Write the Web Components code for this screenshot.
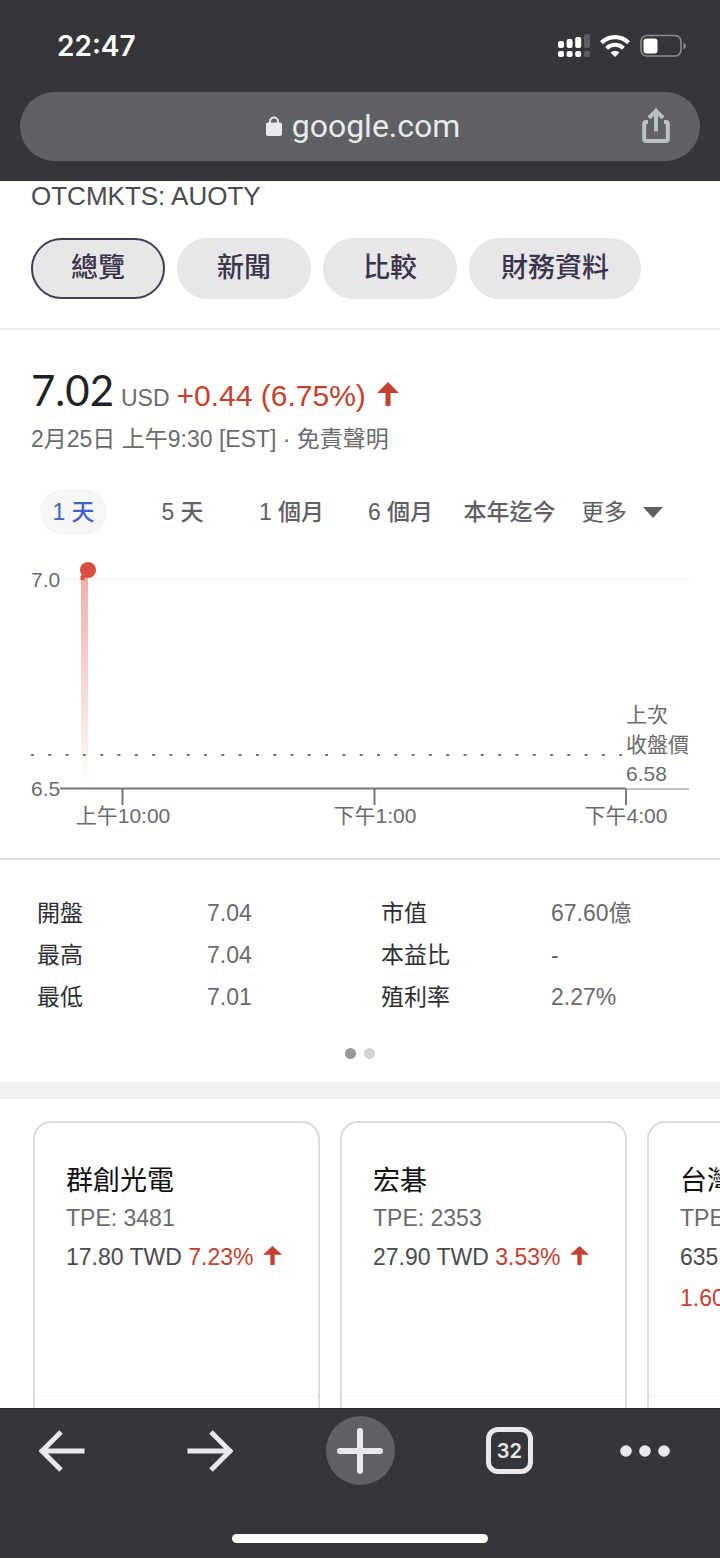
<!DOCTYPE html>
<html lang="zh-Hant">
<head>
<meta charset="utf-8">
<meta name="viewport" content="width=device-width, initial-scale=1">
<title>AUOTY</title>
<style>
  body {
    margin: 0;
    background: #fff;
    font-family: "Liberation Sans", "Noto Sans CJK TC", sans-serif;
  }
</style>
</head>
<body>
<phone-screen>
  <status-bar slot="top" time="22:47"></status-bar>
  <address-bar slot="top" host="google.com"></address-bar>

  <stock-head ticker="OTCMKTS: AUOTY">
    <nav-chip active>總覽</nav-chip>
    <nav-chip>新聞</nav-chip>
    <nav-chip>比較</nav-chip>
    <nav-chip>財務資料</nav-chip>
  </stock-head>
  <stock-price price="7.02" currency="USD" change="+0.44 (6.75%)">2月25日 上午9:30 [EST] · 免責聲明</stock-price>
  <range-tabs></range-tabs>
  <price-chart></price-chart>
  <stock-stats></stock-stats>
  <related-stocks>
    <stock-card name="群創光電" code="TPE: 3481" price="17.80 TWD" change="7.23%"></stock-card>
    <stock-card name="宏碁" code="TPE: 2353" price="27.90 TWD" change="3.53%"></stock-card>
    <stock-card name="台灣積體電路" code="TPE: 2330" price="635.00 TWD" change="1.60%"></stock-card>
  </related-stocks>

  <tool-bar slot="bottom" tabs="32"></tool-bar>
</phone-screen>

<script>
const upArrow = `<svg class="up" viewBox="0 0 22 24" preserveAspectRatio="none" aria-hidden="true"><path d="M11 0 22 11H13.500V24H8.500V11H0Z" fill="#c5402f"/></svg>`;

class PhoneScreen extends HTMLElement {
  constructor() {
    super();
    this.attachShadow({ mode: "open" });
    this.shadowRoot.innerHTML = `
      <style>
        :host {
          display: flex;
          flex-direction: column;
          height: 100vh;
        }
        header {
          flex: none;
          padding-bottom: 20px;
          background: #35363a;
        }
        main {
          flex: 1;
          min-height: 0;
          overflow: hidden;
        }
        footer {
          flex: none;
          background: #35363a;
        }
      </style>
      <header><slot name="top"></slot></header>
      <main><slot></slot></main>
      <footer><slot name="bottom"></slot></footer>
    `;
  }
}
customElements.define("phone-screen", PhoneScreen);

class StatusBar extends HTMLElement {
  constructor() {
    super();
    this.attachShadow({ mode: "open" });
    this.shadowRoot.innerHTML = `
      <style>
        :host {
          display: flex;
          justify-content: space-between;
          align-items: center;
          height: 92px;
          padding: 0 34px 0 57px;
          color: #fff;
        }
        time {
          font: 600 28px/32px Inter, "Liberation Sans", sans-serif;
        }
        div {
          display: flex;
          align-items: center;
          gap: 10px;
        }
      </style>
      <time>${this.getAttribute("time")}</time>
      <div>
        <svg width="32" height="24" viewBox="0 0 32 24" fill="#fff" aria-label="signal">
          <rect x="0" y="7" width="6" height="7" rx="2"/>
          <rect x="8.600" y="5" width="6" height="9" rx="2"/>
          <rect x="17.200" y="3" width="6" height="11" rx="2"/>
          <rect x="26" y="0" width="6" height="14" rx="2" fill="#5c5d61"/>
          <rect x="0" y="17" width="6" height="6" rx="2"/>
          <rect x="8.600" y="17" width="6" height="6" rx="2"/>
          <rect x="17.200" y="17" width="6" height="6" rx="2"/>
          <rect x="26" y="17" width="6" height="6" rx="2" fill="#5c5d61"/>
        </svg>
        <svg width="30" height="22" viewBox="0 0 30 22" aria-label="wifi">
          <path d="M1.500 7.800A19 19 0 0 1 28.500 7.800" fill="none" stroke="#fff" stroke-width="4.200"/>
          <path d="M6.600 13.300A12 12 0 0 1 23.400 13.300" fill="none" stroke="#fff" stroke-width="4"/>
          <path d="M15 22 10.500 17.600A6.400 6.400 0 0 1 19.500 17.600Z" fill="#fff"/>
        </svg>
        <svg width="46" height="24" viewBox="0 0 46 24" aria-label="battery">
          <rect x="1" y="1.500" width="40" height="20.500" rx="6" fill="none" stroke="#8b8c8f" stroke-width="1.600"/>
          <rect x="3.500" y="4.500" width="14" height="15" rx="3" fill="#fff"/>
          <path d="M43.500 8.500Q46 9.500 46 12T43.500 15.500Z" fill="#8b8c8f"/>
        </svg>
      </div>
    `;
  }
}
customElements.define("status-bar", StatusBar);

class AddressBar extends HTMLElement {
  constructor() {
    super();
    this.attachShadow({ mode: "open" });
    this.shadowRoot.innerHTML = `
      <style>
        :host {
          display: grid;
          grid-template-columns: 1fr auto 1fr;
          align-items: center;
          height: 69px;
          margin: 0 20px;
          border-radius: 35px;
          background: #5f6165;
        }
        label {
          grid-column: 2;
          display: flex;
          align-items: center;
          gap: 10px;
          padding: 0 0 2px 6px;
        }
        input {
          field-sizing: content;
          padding: 0;
          border: 0;
          background: none;
          color: #e8eaed;
          font: 400 32px/40px Roboto, "Liberation Sans", sans-serif;
        }
        button {
          justify-self: end;
          display: flex;
          margin-right: 30px;
          padding: 0 0 2px;
          border: 0;
          background: none;
        }
      </style>
      <label>
        <svg width="16" height="20" viewBox="0 0 16 20" aria-label="secure">
          <path d="M4 8V5.500a4 4 0 0 1 8 0V8" fill="none" stroke="#e8eaed" stroke-width="2"/>
          <rect y="6.500" width="16" height="13.500" rx="2" fill="#e8eaed"/>
        </svg>
        <input type="text" size="10" aria-label="網址" value="${this.getAttribute("host")}">
      </label>
      <button aria-label="分享">
        <svg width="28" height="35" viewBox="0 0 28 35" fill="none" stroke="#bdc0c5" stroke-width="4">
          <path d="M6 14H4Q2.200 14 2.200 16V31Q2.200 33 4.200 33H23.800Q25.800 33 25.800 31V16Q25.800 14 24 14H22"/>
          <path d="M14 23.500V3M7 9.800 14 2.800 21 9.800"/>
        </svg>
      </button>
    `;
  }
}
customElements.define("address-bar", AddressBar);

class StockHead extends HTMLElement {
  constructor() {
    super();
    this.attachShadow({ mode: "open" });
    this.shadowRoot.innerHTML = `
      <style>
        :host {
          display: block;
          padding: 0 31px 29px;
          border-bottom: 2px solid #ebebed;
        }
        p {
          margin: 0 0 27px;
          color: #4a4b4f;
          font-size: 26px;
          line-height: 30px;
        }
        nav {
          display: flex;
          gap: 12px;
        }
      </style>
      <p>${this.getAttribute("ticker")}</p>
      <nav><slot></slot></nav>
    `;
  }
}
customElements.define("stock-head", StockHead);

class NavChip extends HTMLElement {
  constructor() {
    super();
    this.attachShadow({ mode: "open" });
    this.shadowRoot.innerHTML = `
      <style>
        :host {
          display: block;
        }
        button {
          box-sizing: border-box;
          min-width: 134px;
          height: 61px;
          padding: 0 30px 2px;
          border: 2px solid #e7e7e9;
          border-radius: 31px;
          background: #e7e7e9;
          color: #3b344d;
          font: inherit;
          font-size: 27px;
          font-weight: 500;
          line-height: 30px;
        }
        :host([active]) button {
          border-color: #443c56;
        }
      </style>
      <button><slot></slot></button>
    `;
  }
}
customElements.define("nav-chip", NavChip);

class StockPrice extends HTMLElement {
  constructor() {
    super();
    this.attachShadow({ mode: "open" });
    this.shadowRoot.innerHTML = `
      <style>
        :host {
          display: block;
          padding: 34px 31px 0;
          color: #6a6b6d;
          font-size: 23px;
          line-height: 30px;
        }
        div {
          display: flex;
          align-items: baseline;
          gap: 7px;
          margin-bottom: 8px;
        }
        b {
          color: #202124;
          font: 400 42px/52px Lato, sans-serif;
        }
        em {
          padding-right: 4px;
          color: #c5402f;
          font-size: 30px;
          font-style: normal;
        }
        .up {
          width: 22px;
          height: 24px;
        }
      </style>
      <div>
        <b>${this.getAttribute("price")}</b>
        <span>${this.getAttribute("currency")}</span>
        <em>${this.getAttribute("change")}</em>
        ${upArrow}
      </div>
      <slot></slot>
    `;
  }
}
customElements.define("stock-price", StockPrice);

class RangeTabs extends HTMLElement {
  constructor() {
    super();
    this.attachShadow({ mode: "open" });
    this.shadowRoot.innerHTML = `
      <style>
        :host {
          display: flex;
          align-items: center;
          margin-top: 35px;
          padding: 0 57px 0 19px;
          color: #5f6063;
        }
        nav {
          flex: 1;
          display: grid;
          grid-template-columns: repeat(5, minmax(0, 1fr));
          justify-items: center;
          white-space: nowrap;
        }
        button, select {
          height: 46px;
          padding: 0 12px;
          border: 0;
          border-radius: 23px;
          background: none;
          color: inherit;
          font: inherit;
          font-size: 23px;
          font-weight: 500;
          line-height: 30px;
        }
        nav button:last-child {
          padding: 0;
        }
        .on {
          background: #f7f7f8;
          color: #3f63c8;
        }
        label {
          display: flex;
          align-items: center;
          gap: 16px;
          padding-left: 17px;
        }
        select {
          appearance: none;
          padding: 0;
          font-weight: 400;
        }
      </style>
      <nav>
        <button class="on">1 天</button>
        <button>5 天</button>
        <button>1 個月</button>
        <button>6 個月</button>
        <button>本年迄今</button>
      </nav>
      <label>
        <select aria-label="更多時間範圍">
          <option>更多</option>
          <option>1 年</option>
          <option>5 年</option>
        </select>
        <svg width="20" height="11" viewBox="0 0 20 11" aria-hidden="true"><path d="M0 0H20L10 11Z" fill="#5f6063"/></svg>
      </label>
    `;
  }
}
customElements.define("range-tabs", RangeTabs);

class PriceChart extends HTMLElement {
  constructor() {
    super();
    this.attachShadow({ mode: "open" });
    this.shadowRoot.innerHTML = `
      <style>
        :host {
          display: block;
          border-bottom: 2px solid #dcdddf;
        }
        svg {
          display: block;
          width: 100%;
        }
        text {
          fill: #6a6b6d;
          font-size: 21px;
        }
        .x {
          text-anchor: middle;
        }
      </style>
      <svg viewBox="0 0 720 323">
        <defs>
          <linearGradient id="fade" x1="0" y1="0" x2="0" y2="1">
            <stop offset="0" stop-color="#d94e3f" stop-opacity="0.45"/>
            <stop offset="1" stop-color="#d94e3f" stop-opacity="0"/>
          </linearGradient>
        </defs>
        <path d="M62 44.500H689" stroke="#f6f6f7" stroke-width="2"/>
        <rect x="81" y="42" width="7" height="212" fill="url(#fade)"/>
        <path d="M82.500 45V42L88 35" fill="none" stroke="#d94e3f" stroke-width="4"/>
        <circle cx="88" cy="35" r="8" fill="#d94e3f"/>
        <path d="M31 220H622" stroke="#77787c" stroke-width="2" stroke-dasharray="3 14.300"/>
        <path d="M60 253.500H626" stroke="#77787c" stroke-width="2"/>
        <path d="M626 254H689" stroke="#a9aaad" stroke-width="1.500"/>
        <path d="M122.500 254V270M374.500 254V270M626 254V270" stroke="#77787c" stroke-width="2"/>
        <text x="31" y="52">7.0</text>
        <text x="31" y="261">6.5</text>
        <text class="x" x="123" y="288">上午10:00</text>
        <text class="x" x="375" y="288">下午1:00</text>
        <text class="x" x="626" y="288">下午4:00</text>
        <text x="626" y="187">上次</text>
        <text x="626" y="217">收盤價</text>
        <text x="626" y="246">6.58</text>
      </svg>
    `;
  }
}
customElements.define("price-chart", PriceChart);

class StockStats extends HTMLElement {
  constructor() {
    super();
    this.attachShadow({ mode: "open" });
    this.shadowRoot.innerHTML = `
      <style>
        :host {
          display: block;
          padding: 32px 0 23px;
          border-bottom: 17px solid #eff0f2;
        }
        table {
          width: 100%;
          padding-left: 37px;
          border-spacing: 0;
          table-layout: fixed;
          font-size: 23px;
          line-height: 42px;
          text-align: left;
        }
        th, td {
          width: 170px;
          padding: 0;
        }
        td:nth-child(2) {
          width: 174px;
        }
        td:last-child {
          width: auto;
        }
        th {
          color: #2d2e31;
          font-weight: 400;
        }
        td {
          color: #6a6b6d;
        }
        .dots {
          display: flex;
          justify-content: center;
          gap: 8px;
          margin-top: 30px;
        }
        .dots button {
          width: 11px;
          height: 11px;
          padding: 0;
          border: 0;
          border-radius: 50%;
          background: #d4d4d4;
        }
        .dots .on {
          background: #979797;
        }
      </style>
      <table>
        <tr><th scope="row">開盤</th><td>7.04</td><th scope="row">市值</th><td>67.60億</td></tr>
        <tr><th scope="row">最高</th><td>7.04</td><th scope="row">本益比</th><td>-</td></tr>
        <tr><th scope="row">最低</th><td>7.01</td><th scope="row">殖利率</th><td>2.27%</td></tr>
      </table>
      <div class="dots">
        <button class="on" aria-label="第 1 頁"></button>
        <button aria-label="第 2 頁"></button>
      </div>
    `;
  }
}
customElements.define("stock-stats", StockStats);

class RelatedStocks extends HTMLElement {
  constructor() {
    super();
    this.attachShadow({ mode: "open" });
    this.shadowRoot.innerHTML = `
      <style>
        :host {
          display: flex;
          gap: 20px;
          padding: 22px 33px;
          overflow: hidden;
        }
      </style>
      <slot></slot>
    `;
  }
}
customElements.define("related-stocks", RelatedStocks);

class StockCard extends HTMLElement {
  constructor() {
    super();
    this.attachShadow({ mode: "open" });
    this.shadowRoot.innerHTML = `
      <style>
        :host {
          flex: none;
          box-sizing: border-box;
          width: 287px;
          border: 2px solid #dcdce0;
          border-radius: 18px;
        }
        a {
          box-sizing: border-box;
          display: block;
          min-height: 272px;
          padding: 40px 31px 0;
          color: #4a4b4f;
          font-size: 23px;
          line-height: 41px;
          text-decoration: none;
        }
        h3 {
          margin: 0;
          color: #111;
          font-size: 27px;
          font-weight: 400;
          line-height: 36px;
          white-space: nowrap;
        }
        p {
          margin: 0;
          color: #6a6b6d;
          line-height: 38px;
        }
        span {
          display: inline-block;
          white-space: nowrap;
        }
        .change {
          color: #c5402f;
        }
        .up {
          width: 19px;
          height: 19px;
          margin-left: 3px;
        }
        footer {
          height: 60px;
          border-top: 2px solid #f9f9fa;
        }
      </style>
      <a href="#">
        <h3>${this.getAttribute("name")}</h3>
        <p>${this.getAttribute("code")}</p>
        <span>${this.getAttribute("price")}</span>
        <span class="change">${this.getAttribute("change")} ${upArrow}</span>
      </a>
      <footer></footer>
    `;
  }
}
customElements.define("stock-card", StockCard);

class ToolBar extends HTMLElement {
  constructor() {
    super();
    this.attachShadow({ mode: "open" });
    this.shadowRoot.innerHTML = `
      <style>
        :host {
          display: block;
          padding: 7px 0 15px;
          border-top: 1px solid #28292c;
        }
        nav {
          display: flex;
          justify-content: space-between;
          padding: 0 54px 0 27px;
        }
        button {
          display: flex;
          justify-content: center;
          align-items: center;
          width: 69px;
          height: 69px;
          padding: 0;
          border: 0;
          border-radius: 50%;
          background: none;
          color: #e8e9ee;
        }
        .add {
          background: #5f6165;
        }
        .more {
          width: 42px;
        }
        .more svg {
          flex: none;
        }
        .tabs span {
          box-sizing: border-box;
          width: 47px;
          height: 47px;
          border: 5px solid;
          border-radius: 12px;
          font: 600 20px/38px Inter, "Liberation Sans", sans-serif;
        }
        hr {
          width: 256px;
          height: 9px;
          margin: 49px auto 0;
          border: 0;
          border-radius: 5px;
          background: #fff;
        }
      </style>
      <nav>
        <button aria-label="上一頁">
          <svg width="47" height="42" viewBox="0 0 47 42" fill="none" stroke="currentColor" stroke-width="5"><path d="M46.500 21H4M23 2 4 21 23 40"/></svg>
        </button>
        <button aria-label="下一頁">
          <svg width="47" height="42" viewBox="0 0 47 42" fill="none" stroke="currentColor" stroke-width="5"><path d="M.500 21H43M24 2 43 21 24 40"/></svg>
        </button>
        <button class="add" aria-label="新分頁">
          <svg width="46" height="46" viewBox="0 0 46 46" stroke="currentColor" stroke-width="6" stroke-linecap="round"><path d="M3 23H43M23 3V43"/></svg>
        </button>
        <button class="tabs" aria-label="分頁"><span>${this.getAttribute("tabs")}</span></button>
        <button class="more" aria-label="更多">
          <svg width="50" height="12" viewBox="0 0 50 12" fill="currentColor"><circle cx="6" cy="6" r="5.800"/><circle cx="25" cy="6" r="5.800"/><circle cx="44" cy="6" r="5.800"/></svg>
        </button>
      </nav>
      <hr>
    `;
  }
}
customElements.define("tool-bar", ToolBar);
</script>
</body>
</html>
